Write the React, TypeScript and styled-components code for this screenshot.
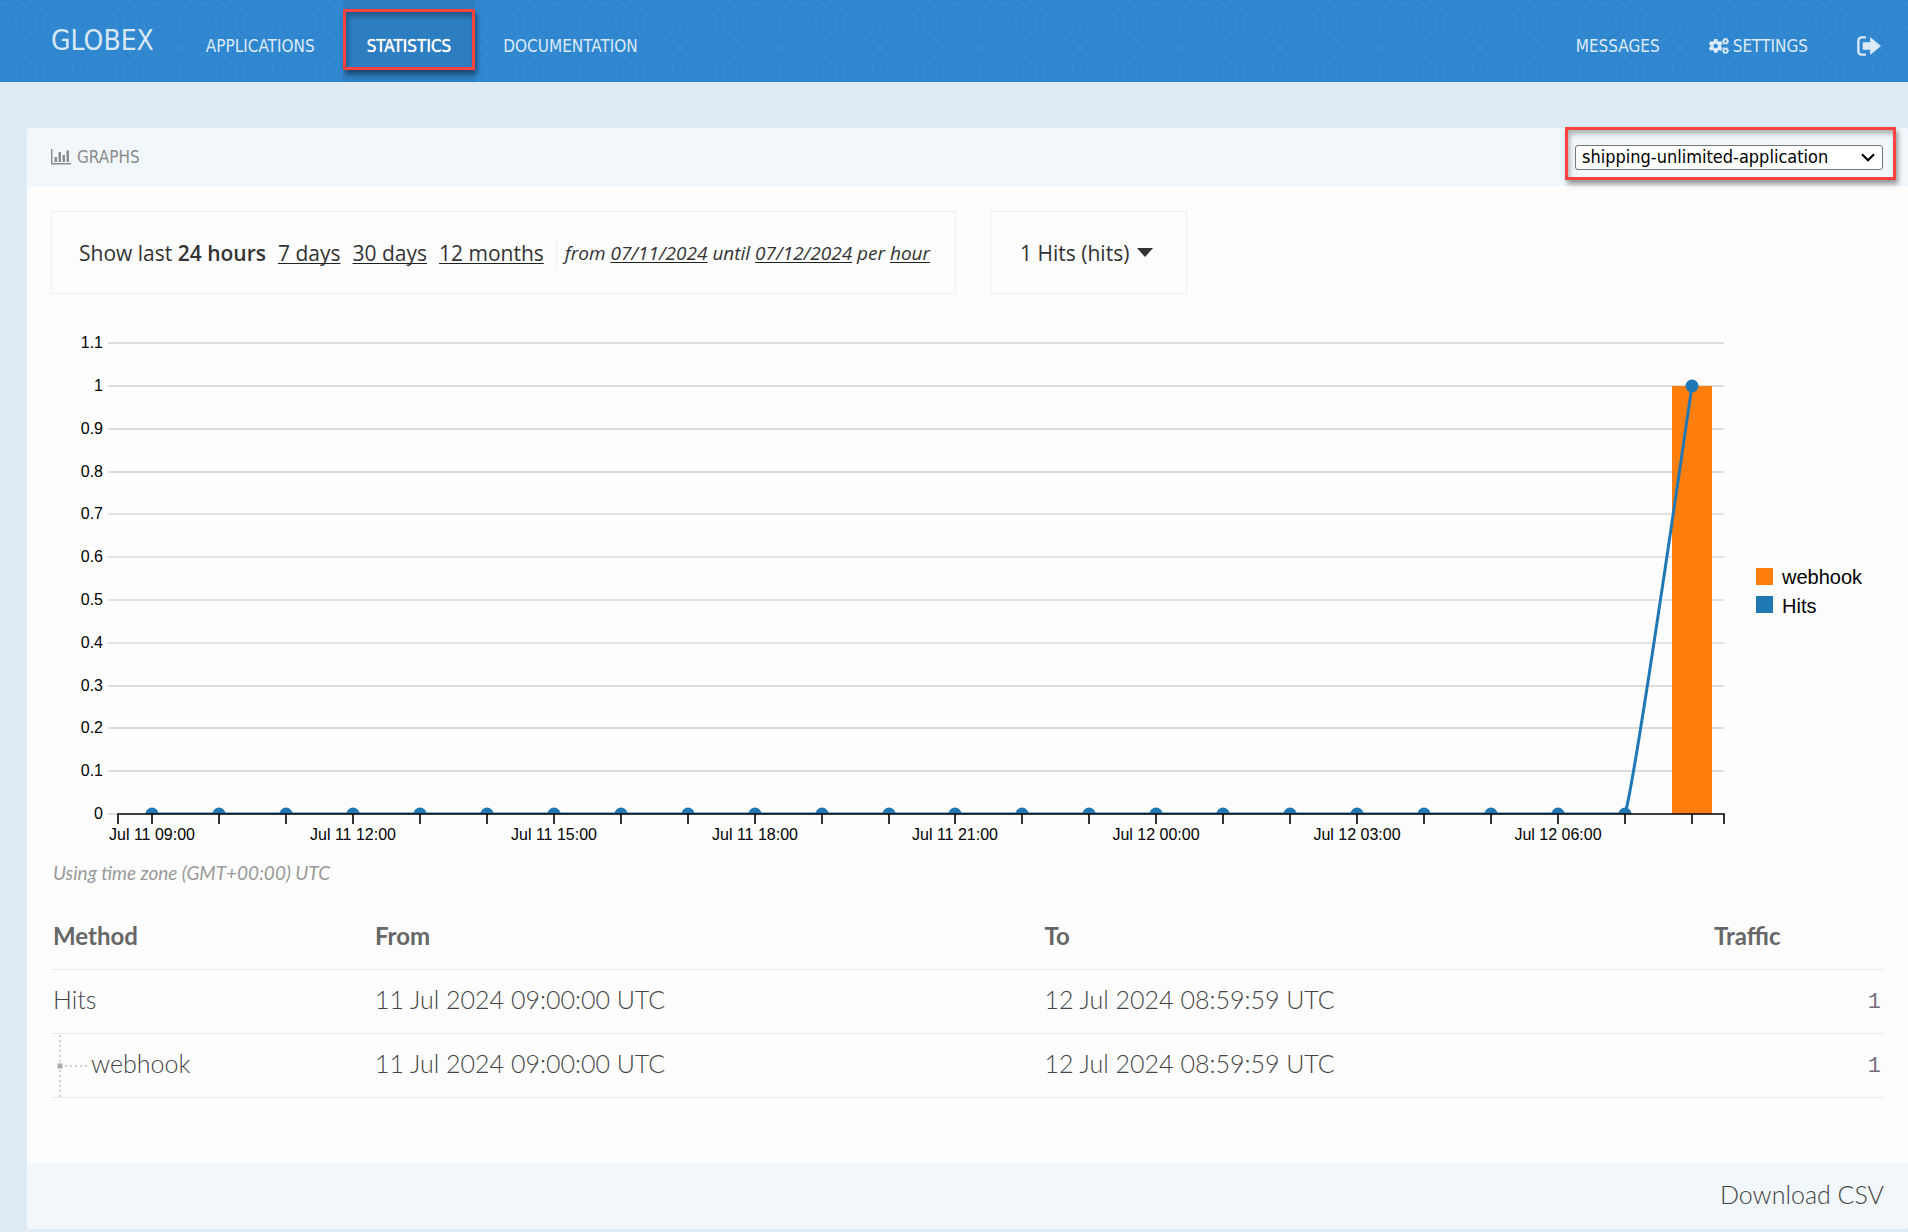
import React, { useEffect, useRef, useState } from "react";
import styled, { createGlobalStyle } from "styled-components";
import { FaCogs } from "react-icons/fa";

const headFont = '"DejaVu Sans Condensed", "Trebuchet MS", sans-serif';
const bodyFont = 'Lato, "Open Sans", sans-serif';
const filterFont = '"Open Sans", "Noto Sans", sans-serif';
const chartFont = '"Liberation Sans", Arial, sans-serif';

const GlobalStyle = createGlobalStyle`
  *, *::before, *::after { box-sizing: border-box; }
  body { margin: 0; background: #deebf5; font-family: ${bodyFont}; color: #333; }
`;

const Header = styled.header`
  display: flex;
  align-items: stretch;
  justify-content: space-between;
  height: 82px;
  padding: 0 3px 0 51px;
  background: #2f86cf
    repeating-radial-gradient(circle at 25px 25px, #2f86cf 0, #2f86cf 3px, #3289d2 4px, #3289d2 6px, #2f86cf 7px)
    -20px -2px / 50px 50px;
  font-family: ${headFont};
`;

const HeaderGroup = styled.div`
  display: flex;
  align-items: stretch;
  gap: 1px;
`;

const Brand = styled.a`
  display: flex;
  align-items: center;
  margin-right: 27px;
  color: #d6e7f6;
  font-size: 28px;
  line-height: 82px;
  text-decoration: none;
`;

const Nav = styled.nav`
  display: flex;
  gap: 4px;
`;

const NavLink = styled.a<{ $active?: boolean }>`
  position: relative;
  display: flex;
  align-items: center;
  gap: 4px;
  padding: 9px 24px 0;
  color: ${(p) => (p.$active ? "#fff" : "#dbeaf7")};
  background: ${(p) => (p.$active ? "#2d7dc1" : "transparent")};
  font-size: 17px;
  text-decoration: none;
  text-shadow: ${(p) => (p.$active ? "0 0 1px #fff" : "none")};
`;

const Highlight = styled.span`
  position: absolute;
  inset: 9px 0 12px 0;
  border: 3px solid #fb4242;
  box-shadow: 2px 4px 5px rgba(0, 0, 0, 0.45), inset 2px 4px 5px rgba(0, 0, 0, 0.3);
  pointer-events: none;
`;

const Main = styled.main`
  padding: 46px 0 3px 27px;
`;

const Panel = styled.section`
  display: flex;
  flex-direction: column;
  background: #fdfdfe;
  border-radius: 4px;
`;

const PanelHeader = styled.header`
  display: flex;
  align-items: center;
  justify-content: space-between;
  height: 58px;
  padding: 0 25px 0 24px;
  background: #f2f7fb;
  border-radius: 4px 4px 0 0;
`;

const PanelTitle = styled.h1`
  display: flex;
  align-items: center;
  gap: 6px;
  margin: 0;
  color: #8b8b8b;
  font: 400 17px/24px ${headFont};
`;

const SelectBox = styled.div`
  position: relative;
  width: 308px;
`;

const SelectHighlight = styled.span`
  position: absolute;
  inset: -18px -13px -10px -10px;
  border: 3px solid #fb4242;
  box-shadow: 2px 4px 5px rgba(0, 0, 0, 0.4), inset 2px 4px 5px rgba(0, 0, 0, 0.28);
  pointer-events: none;
`;

const Select = styled.select`
  display: block;
  width: 100%;
  height: 25px;
  padding: 0 28px 0 6px;
  appearance: none;
  color: #000;
  background: #fff;
  border: 1px solid #767676;
  border-radius: 3px;
  font: 400 18px/22px ${headFont};
`;

const Chevron = styled.svg`
  position: absolute;
  right: 8px;
  top: 8px;
  pointer-events: none;
`;

const PanelBody = styled.div`
  padding: 25px 24px 65px;
`;

const Filters = styled.div`
  display: flex;
  align-items: stretch;
  gap: 34px;
  height: 83px;
`;

const FilterBox = styled.div`
  display: flex;
  align-items: center;
  padding: 0 25px 0 27px;
  border: 1px solid #eeeff1;
  font: 400 21px/28px ${filterFont};
`;

const Ranges = styled.div`
  display: flex;
  gap: 12px;
  padding-right: 12px;
  margin-right: 8px;
  border-right: 1px solid #eeeff1;
`;

const Current = styled.strong`
  font-weight: 600;
`;

const RangeLink = styled.a`
  color: inherit;
  text-decoration-color: #222;
  text-decoration-thickness: 1px;
  text-decoration-skip-ink: none;
  text-underline-offset: 2px;
`;

const Period = styled.em`
  font-size: 19px;
`;

const MetricButton = styled.button`
  display: flex;
  align-items: center;
  gap: 8px;
  padding: 0 33px 0 29px;
  border: 1px solid #eeeff1;
  background: transparent;
  color: #333;
  font: 400 21px/28px ${filterFont};
`;

const ChartBox = styled.div`
  margin-top: 29px;
  height: 530px;

  svg { display: block; }
`;

const AxisText = styled.text`
  font: 16px ${chartFont};
  fill: #000;
`;

const LegendText = styled.text`
  font: 20px ${chartFont};
  fill: #000;
`;

const TimeZone = styled.p`
  margin: 7px 0 19px 2px;
  color: #999;
  font-size: 19px;
  font-style: italic;
  line-height: 26px;
`;

const Table = styled.table`
  width: 100%;
  border-collapse: collapse;
  table-layout: fixed;
  color: #444;
  font-size: 25px;
  font-weight: 300;
`;

const HeadCell = styled.th<{ $w?: string }>`
  width: ${(p) => p.$w ?? "auto"};
  height: 64px;
  padding: 0 2px 3px;
  border-bottom: 1px solid #e9ebed;
  color: #666;
  font-size: 24px;
  font-weight: 700;
  text-align: left;
`;

const Cell = styled.td`
  height: 64px;
  padding: 0 2px 4px;
  border-bottom: 1px solid #e9ebed;
  line-height: 34px;
`;

const TreeCell = styled(Cell)`
  padding: 0;
`;

const TreeItem = styled.div`
  display: flex;
  align-items: center;
  gap: 3px;
  height: 63px;
`;

const TreeLabel = styled.span`
  padding-bottom: 4px;
`;

const ValueCell = styled(Cell)`
  padding: 3px 3px 0 2px;
  color: #7a6e7e;
  text-align: right;
  font: 400 22px/34px "Liberation Mono", monospace;
`;

const PanelFooter = styled.footer`
  display: flex;
  align-items: center;
  justify-content: flex-end;
  height: 66px;
  padding: 0 24px 4px;
  background: #f2f7fb;
  border-radius: 0 0 4px 4px;
`;

const Download = styled.a`
  color: #444;
  font-size: 25px;
  font-weight: 300;
  text-decoration: none;
`;

const SignOutIcon = () => (
  <svg width="24" height="20" viewBox="0 0 24 20" aria-hidden="true">
    <path d="M9 1.4H4.6A3.2 3.2 0 0 0 1.4 4.6v10.8a3.2 3.2 0 0 0 3.2 3.2H9" fill="none" stroke="currentColor" strokeWidth="2.4" />
    <path d="M6 6.6h7.4V1.6L23.6 10l-10.2 8.4v-5H6z" fill="currentColor" stroke="currentColor" strokeWidth="0.6" strokeLinejoin="round" />
  </svg>
);

const BarsIcon = () => (
  <svg width="20" height="16" viewBox="0 0 20 16" aria-hidden="true">
    <path d="M0.7 0v14.8H20" fill="none" stroke="currentColor" strokeWidth="1.4" />
    <path d="M3.5 8h2.5v5H3.5zM7.5 3h2.5v10H7.5zM11.5 6h2.5v7h-2.5zM15.5 1.5H18V13h-2.5z" fill="currentColor" />
  </svg>
);

const hours = Array.from({ length: 24 }, (_, i) => {
  const h = (9 + i) % 24;
  return { label: `Jul ${i < 15 ? 11 : 12} ${String(h).padStart(2, "0")}:00`, hits: i === 23 ? 1 : 0 };
});

function Chart() {
  const box = useRef<HTMLDivElement>(null);
  const [width, setWidth] = useState(1833);

  useEffect(() => {
    const el = box.current;
    if (!el) return;
    const observer = new ResizeObserver(() => setWidth(el.clientWidth));
    observer.observe(el);
    return () => observer.disconnect();
  }, []);

  const left = 67;
  const right = width - 160;
  const base = 491;
  const unit = 428;
  const x = (i: number) => Math.round(left + 34 + ((right - left - 66) * i) / 23);
  const y = (v: number) => Math.round(base - v * unit);
  const last = hours.length - 1;
  const tension = 0.08;
  const curve =
    `M${x(0)} ${base}H${x(last - 1)}` +
    `C${x(last - 1) + (x(last) - x(last - 2)) * tension} ${base - unit * tension} ` +
    `${x(last) - (x(last) - x(last - 1)) * tension} ${y(1) + unit * tension} ${x(last)} ${y(1)}`;

  return (
    <ChartBox ref={box}>
      <svg width={width} height="530" role="img" aria-label="Hits per hour">
        <defs>
          <clipPath id="plot">
            <rect x={left} y="0" width={right - left} height={base} />
          </clipPath>
        </defs>
        {Array.from({ length: 12 }, (_, i) => (
          <g key={i}>
            <path d={`M${left - 10} ${y(i / 10)}H${i ? right : left}`} stroke="#dcddde" strokeWidth={i > 3 && i < 8 ? 1.5 : 2} />
            <AxisText x={left - 15} y={y(i / 10) + 5} textAnchor="end">{i / 10}</AxisText>
          </g>
        ))}
        <rect x={x(last) - 20} y={y(1)} width="40" height={unit} fill="#ff7f0e" />
        <g clipPath="url(#plot)">
          <path d={curve} fill="none" stroke="#1f77b4" strokeWidth="3" />
          {hours.map((h, i) => (
            <circle key={h.label} cx={x(i)} cy={y(h.hits)} r="6.5" fill="#1f77b4" />
          ))}
        </g>
        <path d={`M${left} ${base + 10}V${base}H${right}V${base + 10}`} fill="none" stroke="#000" strokeWidth="1.6" />
        {hours.map((h, i) => (
          <g key={h.label}>
            <path d={`M${x(i)} ${base}v10`} stroke="#000" strokeWidth="1.6" />
            {i % 3 === 0 && i < 22 && (
              <AxisText x={x(i)} y={base + 26} textAnchor="middle">{h.label}</AxisText>
            )}
          </g>
        ))}
        <rect x={right + 32} y="245" width="17" height="17" fill="#ff7f0e" />
        <LegendText x={right + 58} y="261">webhook</LegendText>
        <rect x={right + 32} y="273" width="17" height="17" fill="#1f77b4" />
        <LegendText x={right + 58} y="290">Hits</LegendText>
      </svg>
    </ChartBox>
  );
}

export default function App() {
  return (
    <>
      <GlobalStyle />
      <Header>
        <HeaderGroup>
          <Brand href="#">GLOBEX</Brand>
          <Nav aria-label="Main">
            <NavLink href="#applications">APPLICATIONS</NavLink>
            <NavLink href="#statistics" $active aria-current="page">
              STATISTICS
              <Highlight />
            </NavLink>
            <NavLink href="#documentation">DOCUMENTATION</NavLink>
          </Nav>
        </HeaderGroup>
        <HeaderGroup>
          <NavLink href="#messages">MESSAGES</NavLink>
          <NavLink href="#settings"><FaCogs size={20} />SETTINGS</NavLink>
          <NavLink href="#sign-out" aria-label="Sign out"><SignOutIcon /></NavLink>
        </HeaderGroup>
      </Header>
      <Main>
        <Panel>
          <PanelHeader>
            <PanelTitle><BarsIcon />GRAPHS</PanelTitle>
            <SelectBox>
              <Select aria-label="Application" defaultValue="shipping">
                <option value="shipping">shipping-unlimited-application</option>
              </Select>
              <Chevron width="14" height="9" viewBox="0 0 14 9" aria-hidden="true">
                <path d="M1 1.2l6 6 6-6" fill="none" stroke="#000" strokeWidth="2.2" />
              </Chevron>
              <SelectHighlight />
            </SelectBox>
          </PanelHeader>
          <PanelBody>
            <Filters>
              <FilterBox>
                <Ranges>
                  <span>Show last <Current>24 hours</Current></span>
                  <RangeLink href="#7d">7 days</RangeLink>
                  <RangeLink href="#30d">30 days</RangeLink>
                  <RangeLink href="#12m">12 months</RangeLink>
                </Ranges>
                <Period>
                  from <RangeLink href="#from">07/11/2024</RangeLink> until{" "}
                  <RangeLink href="#until">07/12/2024</RangeLink> per <RangeLink href="#hour">hour</RangeLink>
                </Period>
              </FilterBox>
              <MetricButton type="button">
                1 Hits (hits)
                <svg width="16" height="9" viewBox="0 0 16 9" aria-hidden="true">
                  <path d="M0 0h16L8 9z" fill="#333" />
                </svg>
              </MetricButton>
            </Filters>
            <Chart />
            <TimeZone>Using time zone (GMT+00:00) UTC</TimeZone>
            <Table>
              <thead>
                <tr>
                  <HeadCell scope="col" $w="322px">Method</HeadCell>
                  <HeadCell scope="col">From</HeadCell>
                  <HeadCell scope="col">To</HeadCell>
                  <HeadCell scope="col" $w="172px">Traffic</HeadCell>
                </tr>
              </thead>
              <tbody>
                <tr>
                  <Cell>Hits</Cell>
                  <Cell>11 Jul 2024 09:00:00 UTC</Cell>
                  <Cell>12 Jul 2024 08:59:59 UTC</Cell>
                  <ValueCell>1</ValueCell>
                </tr>
                <tr>
                  <TreeCell>
                    <TreeItem>
                      <svg width="37" height="63" viewBox="0 0 37 63" aria-hidden="true">
                        <path d="M9 1V63M14 32H37" fill="none" stroke="#cfcfcf" strokeWidth="2" strokeDasharray="2 3" />
                        <rect x="6.5" y="29.5" width="5" height="5" fill="#aaa" />
                      </svg>
                      <TreeLabel>webhook</TreeLabel>
                    </TreeItem>
                  </TreeCell>
                  <Cell>11 Jul 2024 09:00:00 UTC</Cell>
                  <Cell>12 Jul 2024 08:59:59 UTC</Cell>
                  <ValueCell>1</ValueCell>
                </tr>
              </tbody>
            </Table>
          </PanelBody>
          <PanelFooter>
            <Download href="#csv">Download CSV</Download>
          </PanelFooter>
        </Panel>
      </Main>
    </>
  );
}
